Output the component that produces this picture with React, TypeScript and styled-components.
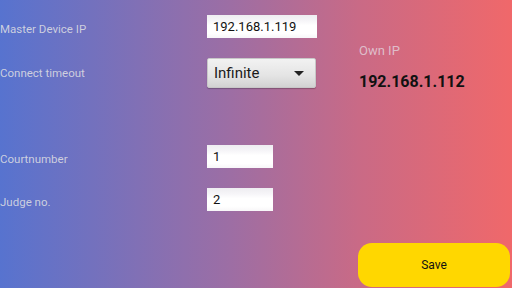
import React, { useState } from 'react';
import styled, { createGlobalStyle } from 'styled-components';

const GlobalStyle = createGlobalStyle`
  html, body {
    margin: 0;
    padding: 0;
    width: 100%;
    height: 100%;
    overflow: hidden;
  }
  #root {
    height: 100%;
  }
  * {
    box-sizing: border-box;
  }
`;

const Screen = styled.div`
  display: flex;
  width: 512px;
  height: 288px;
  background: linear-gradient(90deg, #5773cf 0%, #9d6ea4 45%, #c96a86 70%, #f0686a 100%);
  font-family: Roboto, 'Noto Sans', sans-serif;
`;

const Form = styled.div`
  display: flex;
  flex-direction: column;
  width: 358px;
  padding-top: 15px;
`;

const Row = styled.div<{ $gap: number }>`
  display: flex;
  align-items: center;
  margin-top: ${(p) => p.$gap}px;
`;

const Label = styled.div<{ $drop?: number }>`
  width: 207px;
  padding-top: ${(p) => p.$drop ?? 5}px;
  font-size: 11.5px;
  color: rgba(222, 222, 226, 0.88);
`;

const TextInput = styled.input<{ $width: number }>`
  width: ${(p) => p.$width}px;
  height: 23px;
  border: none;
  outline: none;
  padding: 0 6px;
  font-family: Roboto, 'Noto Sans', sans-serif;
  font-size: 13px;
  color: #111;
  background: linear-gradient(180deg, #eeedf1 0%, #f6f5f8 25%, #ffffff 45%, #ffffff 80%, #f7f6f8 100%);
`;

const Select = styled.div`
  display: flex;
  align-items: center;
  justify-content: space-between;
  width: 109px;
  height: 30px;
  padding: 0 11px 0 6px;
  font-size: 15px;
  color: #1a1a1a;
  border: 1px solid #c8c8c8;
  border-radius: 2px;
  background: linear-gradient(180deg, #f2f2f2 0%, #e4e4e4 60%, #d2d2d2 100%);
  box-shadow: 0 1px 1px rgba(0, 0, 0, 0.25);
  cursor: pointer;
`;

const Caret = styled.span`
  width: 0;
  height: 0;
  margin-top: 1px;
  border-left: 5.5px solid transparent;
  border-right: 5.5px solid transparent;
  border-top: 5px solid #222;
`;

const Side = styled.div`
  display: flex;
  flex-direction: column;
  flex: 1;
  padding: 43px 2px 1px 0;
`;

const OwnLabel = styled.div`
  padding-left: 1px;
  font-size: 13px;
  color: rgba(225, 200, 212, 0.9);
`;

const OwnValue = styled.div`
  margin-top: 14px;
  padding-left: 1px;
  font-size: 16px;
  font-weight: bold;
  color: #111;
`;

const SaveButton = styled.button`
  margin-top: auto;
  height: 44px;
  border: none;
  border-radius: 14px;
  background: #ffd700;
  font-family: Roboto, 'Noto Sans', sans-serif;
  font-size: 12px;
  color: #111;
  cursor: pointer;
`;

const App = () => {
  const [masterIp, setMasterIp] = useState('192.168.1.119');
  const [court, setCourt] = useState('1');
  const [judge, setJudge] = useState('2');

  return (
    <>
      <GlobalStyle />
      <Screen>
        <Form>
          <Row $gap={0}>
            <Label>Master Device IP</Label>
            <TextInput $width={110} value={masterIp} onChange={(e) => setMasterIp(e.target.value)} />
          </Row>
          <Row $gap={20}>
            <Label $drop={0}>Connect timeout</Label>
            <Select>
              Infinite
              <Caret />
            </Select>
          </Row>
          <Row $gap={57}>
            <Label>Courtnumber</Label>
            <TextInput $width={66} value={court} onChange={(e) => setCourt(e.target.value)} />
          </Row>
          <Row $gap={20}>
            <Label>Judge no.</Label>
            <TextInput $width={66} value={judge} onChange={(e) => setJudge(e.target.value)} />
          </Row>
        </Form>
        <Side>
          <OwnLabel>Own IP</OwnLabel>
          <OwnValue>192.168.1.112</OwnValue>
          <SaveButton>Save</SaveButton>
        </Side>
      </Screen>
    </>
  );
};

export default App;
